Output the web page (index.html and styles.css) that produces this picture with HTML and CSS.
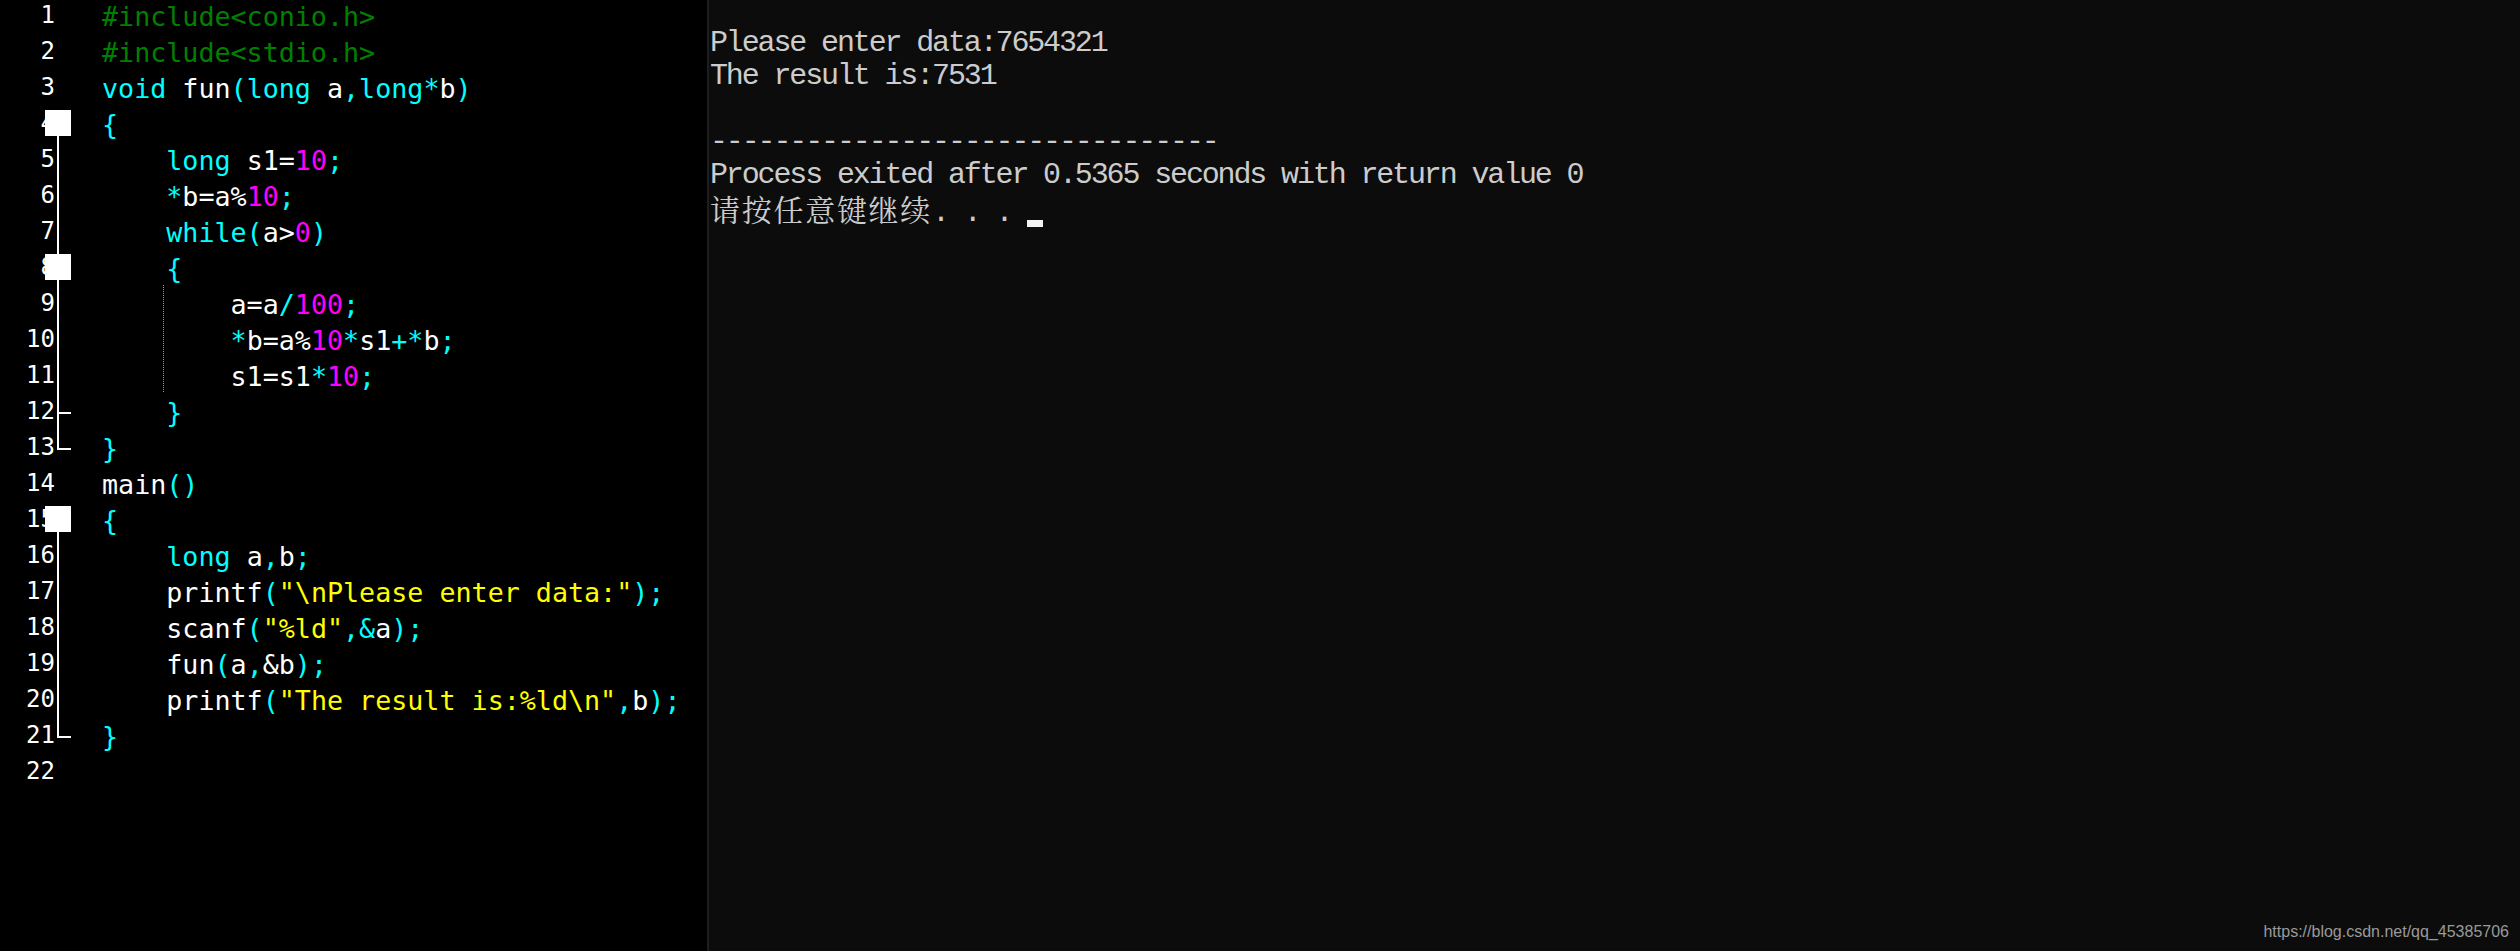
FILE: index.html
```html
<!DOCTYPE html>
<html lang="zh-CN">
<head>
<meta charset="utf-8">
<title>Dev-C++</title>
<link rel="stylesheet" href="styles.css">
</head>
<body>
<div class="screen">
  <div class="editor">
    <div class="lines">
      <div class="row"><span class="ln">1</span><span class="fold"></span><span class="code"><span class="p">#include&lt;conio.h&gt;</span></span></div>
      <div class="row"><span class="ln">2</span><span class="fold"></span><span class="code"><span class="p">#include&lt;stdio.h&gt;</span></span></div>
      <div class="row"><span class="ln">3</span><span class="fold"></span><span class="code"><span class="k">void</span> fun<span class="k">(long</span> a<span class="k">,long*</span>b<span class="k">)</span></span></div>
      <div class="row"><span class="ln">4</span><span class="fold open"></span><span class="code"><span class="k">{</span></span></div>
      <div class="row"><span class="ln">5</span><span class="fold mid"></span><span class="code">    <span class="k">long</span> s1=<span class="n">10</span><span class="k">;</span></span></div>
      <div class="row"><span class="ln">6</span><span class="fold mid"></span><span class="code">    <span class="k">*</span>b=a%<span class="n">10</span><span class="k">;</span></span></div>
      <div class="row"><span class="ln">7</span><span class="fold mid"></span><span class="code">    <span class="k">while(</span>a&gt;<span class="n">0</span><span class="k">)</span></span></div>
      <div class="row"><span class="ln">8</span><span class="fold mid open"></span><span class="code">    <span class="k">{</span></span></div>
      <div class="row"><span class="ln">9</span><span class="fold mid"></span><span class="code guide">        a=a<span class="k">/</span><span class="n">100</span><span class="k">;</span></span></div>
      <div class="row"><span class="ln">10</span><span class="fold mid"></span><span class="code guide">        <span class="k">*</span>b=a%<span class="n">10</span><span class="k">*</span>s1<span class="k">+*</span>b<span class="k">;</span></span></div>
      <div class="row"><span class="ln">11</span><span class="fold mid"></span><span class="code guide">        s1=s1<span class="k">*</span><span class="n">10</span><span class="k">;</span></span></div>
      <div class="row"><span class="ln">12</span><span class="fold mid tick"></span><span class="code">    <span class="k">}</span></span></div>
      <div class="row"><span class="ln">13</span><span class="fold end"></span><span class="code"><span class="k">}</span></span></div>
      <div class="row"><span class="ln">14</span><span class="fold"></span><span class="code">main<span class="k">()</span></span></div>
      <div class="row"><span class="ln">15</span><span class="fold open"></span><span class="code"><span class="k">{</span></span></div>
      <div class="row"><span class="ln">16</span><span class="fold mid"></span><span class="code">    <span class="k">long</span> a<span class="k">,</span>b<span class="k">;</span></span></div>
      <div class="row"><span class="ln">17</span><span class="fold mid"></span><span class="code">    printf<span class="k">(</span><span class="s">"\nPlease enter data:"</span><span class="k">);</span></span></div>
      <div class="row"><span class="ln">18</span><span class="fold mid"></span><span class="code">    scanf<span class="k">(</span><span class="s">"%ld"</span><span class="k">,&amp;</span>a<span class="k">);</span></span></div>
      <div class="row"><span class="ln">19</span><span class="fold mid"></span><span class="code">    fun<span class="k">(</span>a<span class="k">,</span>&amp;b<span class="k">);</span></span></div>
      <div class="row"><span class="ln">20</span><span class="fold mid"></span><span class="code">    printf<span class="k">(</span><span class="s">"The result is:%ld\n"</span><span class="k">,</span>b<span class="k">);</span></span></div>
      <div class="row"><span class="ln">21</span><span class="fold end"></span><span class="code"><span class="k">}</span></span></div>
      <div class="row"><span class="ln">22</span><span class="fold"></span><span class="code"></span></div>
    </div>
  </div>
  <div class="sep"></div>
  <div class="console">
<pre class="out">

Please enter data:7654321
The result is:7531

--------------------------------
Process exited after 0.5365 seconds with return value 0
<span class="cjk">请按任意键继续</span>. . . <span class="cursor"></span></pre>
  </div>
  <div class="wm">https://blog.csdn.net/qq_45385706</div>
</div>
</body>
</html>
```

FILE: styles.css
```css
html, body {
  margin: 0;
  padding: 0;
  background: #0c0c0c;
  overflow: hidden;
}

.screen {
  position: relative;
  display: flex;
  width: 2520px;
  height: 951px;
  overflow: hidden;
}

.editor {
  width: 707px;
  flex: none;
  background: #000000;
  overflow: hidden;
}

.lines {
  margin-top: -3px;
  display: flex;
  flex-direction: column;
}

.row {
  display: flex;
  align-items: flex-start;
  height: 36px;
}

.ln {
  width: 55px;
  flex: none;
  text-align: right;
  font-family: "DejaVu Sans Mono", monospace;
  font-size: 24px;
  line-height: 36px;
  color: #ffffff;
}

.fold {
  position: relative;
  width: 47px;
  height: 36px;
  flex: none;
}

.fold.mid::before,
.fold.end::before,
.fold.open::before {
  content: "";
  position: absolute;
  left: 2px;
  width: 2px;
  background: #ffffff;
}

.fold.mid::before { top: 0; height: 36px; }
.fold.open::before { top: 18px; height: 18px; }
.fold.mid.open::before { top: 0; height: 36px; }
.fold.end::before { top: 0; height: 21px; }

.fold.open::after {
  content: "";
  position: absolute;
  left: -10px;
  top: 5px;
  width: 26px;
  height: 26px;
  background: #ffffff;
}

.fold.end::after,
.fold.tick::after {
  content: "";
  position: absolute;
  left: 2px;
  top: 19px;
  width: 14px;
  height: 2px;
  background: #ffffff;
}

.code {
  position: relative;
  flex: 1;
  white-space: pre;
  font-family: "DejaVu Sans Mono", monospace;
  font-size: 26.7px;
  line-height: 40px;
  color: #ffffff;
}

.code.guide::before {
  content: "";
  position: absolute;
  left: 61px;
  top: 0;
  width: 1px;
  height: 36px;
  background: repeating-linear-gradient(to bottom, #9a9a9a 0 1px, transparent 1px 2px);
}

.k { color: #00ffff; }
.n { color: #ff00ff; }
.s { color: #ffff00; }
.p { color: #008000; }

.sep {
  width: 2px;
  flex: none;
  background: #1e1e1e;
}

.console {
  flex: 1;
  background: #0c0c0c;
}

.out {
  margin: -6px 0 0 1px;
  font-family: "Liberation Mono", monospace;
  font-size: 30px;
  letter-spacing: -2.14px;
  line-height: 33px;
  color: #cccccc;
}

.cjk {
  font-family: "Noto Serif CJK SC", "Noto Sans CJK SC", serif;
  font-size: 30px;
  letter-spacing: 1.72px;
}

.cursor {
  display: inline-block;
  width: 16px;
  height: 7px;
  background: #f2f2f2;
  vertical-align: -6px;
}

.wm {
  position: absolute;
  right: 11px;
  bottom: 10px;
  font-family: "Liberation Sans", Arial, sans-serif;
  font-size: 16px;
  line-height: 18px;
  color: #9a9a9a;
}
```
